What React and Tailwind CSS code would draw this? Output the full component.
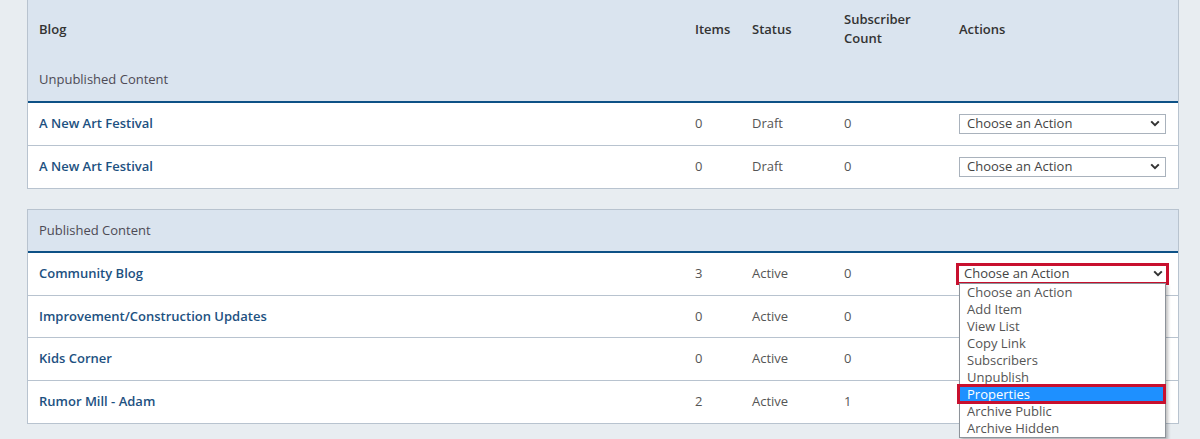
import { useState } from 'react'

const cols = 'grid grid-cols-[655px_57px_92px_115px_1fr]'

const unpublished = [
  { name: 'A New Art Festival', items: 0, status: 'Draft', subs: 0 },
  { name: 'A New Art Festival', items: 0, status: 'Draft', subs: 0 },
]

const published = [
  { name: 'Community Blog', items: 3, status: 'Active', subs: 0, open: true },
  { name: 'Improvement/Construction Updates', items: 0, status: 'Active', subs: 0 },
  { name: 'Kids Corner', items: 0, status: 'Active', subs: 0 },
  { name: 'Rumor Mill - Adam', items: 2, status: 'Active', subs: 1 },
]

const actions = [
  'Choose an Action',
  'Add Item',
  'View List',
  'Copy Link',
  'Subscribers',
  'Unpublish',
  'Properties',
  'Archive Public',
  'Archive Hidden',
]

function Chevron() {
  return (
    <svg width="10" height="7" viewBox="0 0 10 7" className="shrink-0">
      <path d="M1.2 1.4 5 5.2 8.8 1.4" fill="none" stroke="#333" strokeWidth="2" />
    </svg>
  )
}

function ActionSelect({ open }) {
  const [hover] = useState('Properties')
  const box = (
    <div className="flex h-[20px] w-[207px] items-center justify-between border border-[#a9b2bc] bg-white pl-[7px] pr-[5px] text-[13px] text-[#444]">
      <span>Choose an Action</span>
      <Chevron />
    </div>
  )
  if (!open) return box
  return (
    <div className="relative">
      <div className="-m-[3px] w-[213px] border-[3px] border-[#c8102e]">
        <div className="flex h-[16px] items-center justify-between bg-white pl-[5px] pr-[3px] text-[13px] text-[#444]">
          <span>Choose an Action</span>
          <Chevron />
        </div>
      </div>
      <div className="absolute left-0 top-[20px] z-10 w-[207px] border border-[#8d939a] bg-white shadow-[2px_2px_3px_rgba(0,0,0,0.25)]">
        {actions.map((a) =>
          a === hover ? (
            <div key={a} className="relative h-[17px] bg-[#1e90ff] pl-[7px] text-[13px] leading-[17px] text-white">
              {a}
              <div className="absolute -bottom-[1px] -left-[3px] -right-[1px] -top-[2px] border-[3px] border-[#c8102e]" />
            </div>
          ) : (
            <div key={a} className="h-[17px] pl-[7px] text-[13px] leading-[17px] text-[#555]">
              {a}
            </div>
          )
        )}
      </div>
    </div>
  )
}

function Row({ r, last }) {
  return (
    <div className={`${cols} h-[42.5px] items-center bg-white text-[13px] ${last ? '' : 'border-b border-[#b8c3cf]'}`}>
      <div className="px-[11px] font-semibold text-[#1d5181]">{r.name}</div>
      <div className="px-[12px] text-[#555]">{r.items}</div>
      <div className="px-[12px] text-[#555]">{r.status}</div>
      <div className="px-[12px] text-[#555]">{r.subs}</div>
      <div className="px-[12px]">
        <ActionSelect open={r.open} />
      </div>
    </div>
  )
}

export default function App() {
  return (
    <div className="min-h-screen bg-[#e8edf1] pl-[27px] font-['Open_Sans',sans-serif]">
      <div className="w-[1152px] border-x border-b border-[#b8c3cf]">
        <div className="bg-[#dae4ef]">
          <div className={`${cols} h-[58px] items-center text-[13px] font-semibold leading-[19px] text-[#333]`}>
            <div className="px-[11px]">Blog</div>
            <div className="px-[12px]">Items</div>
            <div className="px-[12px]">Status</div>
            <div className="px-[12px]">
              Subscriber
              <br />
              Count
            </div>
            <div className="px-[12px]">Actions</div>
          </div>
          <div className="flex h-[43px] items-center px-[11px] text-[13px] text-[#4d4a55]">Unpublished Content</div>
        </div>
        <div className="border-t-2 border-[#0d5186]">
          {unpublished.map((r, i) => (
            <Row key={i} r={r} last={i === unpublished.length - 1} />
          ))}
        </div>
      </div>

      <div className="mt-[20px] w-[1152px] border border-[#b8c3cf]">
        <div className="flex h-[41px] items-center bg-[#dae4ef] px-[11px] text-[13px] text-[#4d4a55]">Published Content</div>
        <div className="border-t-2 border-[#0d5186]">
          {published.map((r, i) => (
            <Row key={i} r={r} last={i === published.length - 1} />
          ))}
        </div>
      </div>
    </div>
  )
}
